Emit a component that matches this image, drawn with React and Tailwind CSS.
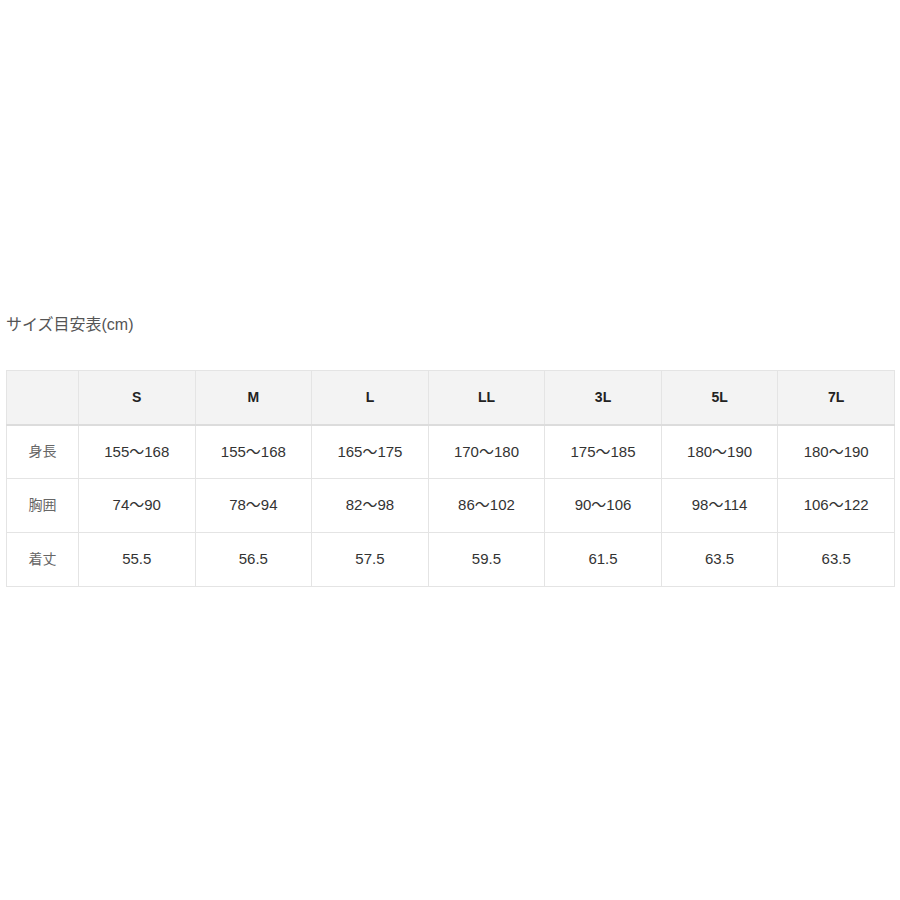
import React from "react";

const sizes = ["S", "M", "L", "LL", "3L", "5L", "7L"];
const rows = [
  { label: "身長", values: ["155〜168", "155〜168", "165〜175", "170〜180", "175〜185", "180〜190", "180〜190"] },
  { label: "胸囲", values: ["74〜90", "78〜94", "82〜98", "86〜102", "90〜106", "98〜114", "106〜122"] },
  { label: "着丈", values: ["55.5", "56.5", "57.5", "59.5", "61.5", "63.5", "63.5"] },
];

export default function App() {
  return (
    <div
      className="w-[900px] h-[900px] bg-white pt-[314px] pl-[6px]"
      style={{ fontFamily: '"Liberation Sans", "Noto Sans CJK JP", sans-serif' }}
    >
      <div className="text-[16px] leading-[22px] text-[#555]">サイズ目安表(cm)</div>
      <table className="mt-[34px] w-[889px] border-collapse table-fixed">
        <colgroup>
          <col className="w-[72px]" />
          {sizes.map((s) => (
            <col key={s} />
          ))}
        </colgroup>
        <thead>
          <tr className="h-[54px] bg-[#f3f3f3]">
            <th className="border border-[#e4e4e4] border-b-2 border-b-[#dcdcdc]" />
            {sizes.map((s) => (
              <th
                key={s}
                className="border border-[#e4e4e4] border-b-2 border-b-[#dcdcdc] text-[14px] font-bold text-[#222] text-center"
              >
                {s}
              </th>
            ))}
          </tr>
        </thead>
        <tbody>
          {rows.map((r) => (
            <tr key={r.label} className="h-[54px]">
              <td className="border border-[#e4e4e4] text-center text-[14px] text-[#666]">{r.label}</td>
              {r.values.map((v, i) => (
                <td key={i} className="border border-[#e4e4e4] text-center text-[15px] text-[#333]">
                  {v}
                </td>
              ))}
            </tr>
          ))}
        </tbody>
      </table>
    </div>
  );
}
